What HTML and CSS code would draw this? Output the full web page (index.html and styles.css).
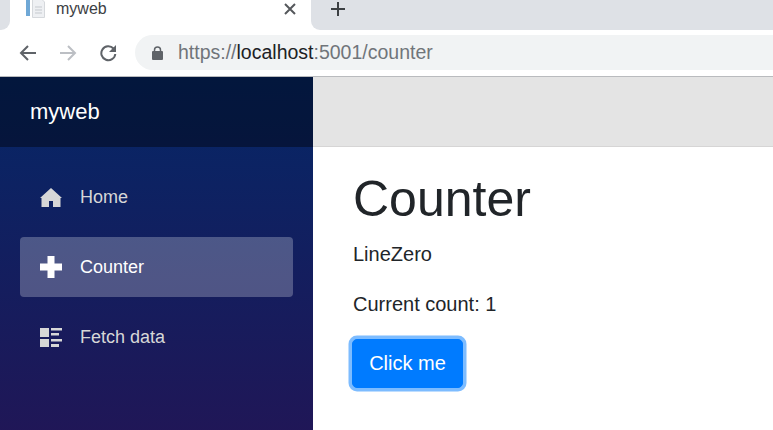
FILE: index.html
```html
<!DOCTYPE html>
<html lang="en">
<head>
  <meta charset="UTF-8">
  <meta name="viewport" content="width=device-width, initial-scale=1.0">
  <title>myweb</title>
  <link rel="stylesheet" href="styles.css">
</head>
<body>
  <div class="chrome">
    <div class="tabstrip">
      <div class="strip-left"></div>
      <div class="tab">
        <svg class="favicon" width="19" height="18" viewBox="0 0 19 18">
          <rect x="0" y="0" width="4" height="16" fill="#6fa8d6"/>
          <path d="M6.500 -2h8l4 4v15.500h-12z" fill="#eef0f3" stroke="#d5d8dc"/>
          <path d="M9 7h7M9 10h7M9 13h7" stroke="#c5c9ce"/>
        </svg>
        <span class="tab-title">myweb</span>
        <svg class="tab-close" width="12" height="12" viewBox="0 0 12 12"><path d="M1 1l10 10M11 1L1 11" stroke="#55585c" stroke-width="2"/></svg>
      </div>
      <div class="strip-right">
        <svg width="16" height="16" viewBox="0 0 16 16"><path d="M8 1v14M1 8h14" stroke="#3c4043" stroke-width="2"/></svg>
      </div>
    </div>
    <div class="toolbar">
      <svg class="nav-icon" width="18" height="18" viewBox="0 0 18 18"><path d="M17 9H2M9 2L2 9l7 7" fill="none" stroke="#5f6368" stroke-width="2"/></svg>
      <svg class="nav-icon" width="18" height="18" viewBox="0 0 18 18"><path d="M1 9h15M9 2l7 7-7 7" fill="none" stroke="#bcbfc4" stroke-width="2"/></svg>
      <svg class="nav-icon" width="18" height="18" viewBox="0 0 18 18"><path d="M14.500 4.500a7 7 0 1 0 1.800 5.500" fill="none" stroke="#5f6368" stroke-width="2"/><path d="M17 1v7h-7z" fill="#5f6368"/></svg>
      <div class="omnibox">
        <svg width="11" height="14" viewBox="0 0 11 14"><rect x="0" y="5" width="11" height="9" rx="1" fill="#5f6368"/><path d="M2.500 6V4a3 3 0 0 1 6 0v2" fill="none" stroke="#5f6368" stroke-width="1.500"/></svg>
        <span class="url">https://<b>localhost</b>:5001/counter</span>
      </div>
    </div>
  </div>
  <div class="app">
    <aside class="sidebar">
      <div class="brand">myweb</div>
      <nav class="nav">
        <a class="nav-link">
          <svg class="oi" width="22" height="19" viewBox="0 0 22 19"><path d="M11 0l11 10h-1.500v9H13v-6H9v6H1.500v-9H0z" fill="#d7d7d7"/></svg>
          Home
        </a>
        <a class="nav-link active">
          <svg class="oi" width="22" height="22" viewBox="0 0 22 22"><path d="M7.500 0h7v7.500H22v7h-7.500V22h-7v-7.500H0v-7h7.500z" fill="#fff"/></svg>
          Counter
        </a>
        <a class="nav-link">
          <svg class="oi" width="22" height="19" viewBox="0 0 22 19"><path d="M0 0h9v9H0zM0 11h9v8H0zM11 0h11v2.500H11zM11 5h8v2.500h-8zM11 11h11v2.500H11zM11 16h8v3h-8z" fill="#d7d7d7"/></svg>
          Fetch data
        </a>
      </nav>
    </aside>
    <main class="main">
      <div class="top-row"></div>
      <div class="content">
        <h1>Counter</h1>
        <p>LineZero</p>
        <p>Current count: 1</p>
        <button class="btn">Click me</button>
      </div>
    </main>
  </div>
</body>
</html>
```

FILE: styles.css
```css
* { box-sizing: border-box; }
html, body { margin: 0; height: 100%; overflow: hidden; }
body { width: 773px; height: 430px; font-family: "Liberation Sans", Arial, sans-serif; background: #fff; color: #212529; }

.chrome { height: 77px; background: #fff; border-bottom: 1px solid #b9bbbe; }
.tabstrip { height: 30px; display: flex; }
.strip-left { width: 10px; background: #dee1e6; border-bottom-right-radius: 9px; }
.strip-right { flex: 1; background: #dee1e6; border-bottom-left-radius: 9px; padding: 1px 0 0 19px; }
.tab { width: 301px; background: #fff; display: flex; align-items: flex-start; padding-left: 16px; padding-right: 15px; }
.tab-title { font-size: 16px; line-height: 18px; color: #3c4043; margin-left: 11px; flex: 1; }
.tab-close { margin-top: 3px; }
.toolbar { height: 46px; display: flex; align-items: center; padding: 0 0 1px 19px; }
.nav-icon { margin-right: 22px; }
.omnibox { flex: 1; height: 35px; margin-left: -4px; background: #f1f3f4; border-radius: 18px 0 0 18px; display: flex; align-items: center; padding-left: 17px; }
.url { font-size: 19.500px; margin-left: 15px; color: #70757a; }
.url b { font-weight: normal; color: #202124; }

.app { display: flex; height: 353px; }
.sidebar { width: 313px; background: linear-gradient(180deg, #052767 0%, #3a0647 100%); background-size: 100% 200%; }
.brand { height: 70px; background: rgba(0, 0, 0, 0.4); color: #fff; font-size: 22px; padding-left: 30px; display: flex; align-items: center; }
.nav { padding: 20px 20px 0; display: flex; flex-direction: column; gap: 10px; }
.nav-link { height: 60px; display: flex; align-items: center; border-radius: 4px; color: #d7d7d7; font-size: 18px; padding-left: 20px; }
.nav-link.active { background: rgba(255, 255, 255, 0.25); color: #fff; }
.oi { margin-right: 18px; }

.main { flex: 1; }
.top-row { height: 70px; background: #e4e4e4; border-bottom: 1px solid #d6d5d5; }
.content { padding: 22px 40px 0; }
h1 { font-size: 50px; font-weight: 400; line-height: 60px; margin: 0 0 10px; }
p { font-size: 20px; line-height: 30px; margin: 0 0 20px; }
.btn { display: block; font: inherit; font-size: 20px; color: #fff; background: #007bff; border: 1px solid #007bff; border-radius: 5px; height: 49px; width: 111px; margin-left: -1px; box-shadow: 0 0 0 3.500px rgba(38, 143, 255, 0.6); outline: none; }
```
